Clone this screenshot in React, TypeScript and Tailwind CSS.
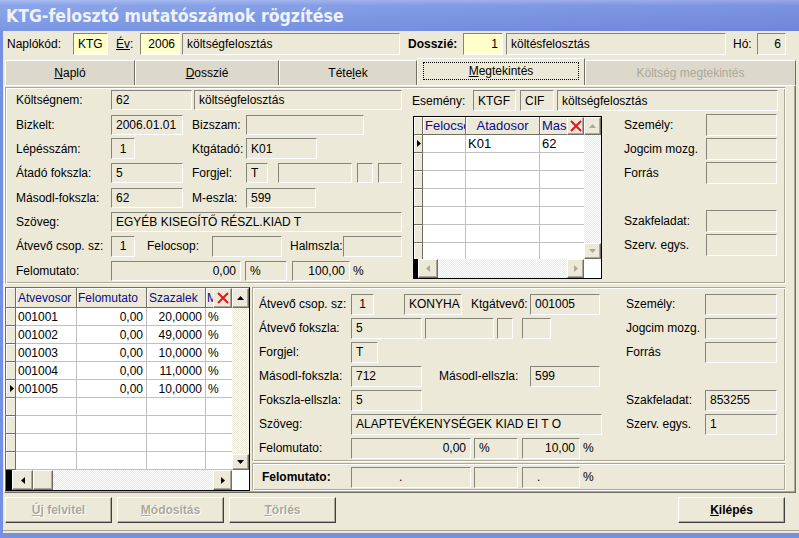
import React from 'react';

// classic win32 bevels
const sunken = 'border border-t-[#868579] border-l-[#868579] border-r-white border-b-white';
const raised =
  'border border-t-white border-l-white border-r-[#716f64] border-b-[#716f64] shadow-[inset_-1px_-1px_0_#aca899]';
const etched =
  'border border-t-[#aca899] border-l-[#aca899] border-r-white border-b-white shadow-[inset_1px_1px_0_#fff,inset_-1px_-1px_0_#aca899]';
const track = 'bg-[image:repeating-conic-gradient(#fff_0_25%,#ece9d8_0_50%)] bg-[length:2px_2px]';

type Align = 'left' | 'right' | 'center';

interface FieldProps {
  className: string;
  children?: React.ReactNode;
  yellow?: boolean;
  align?: Align;
}

const Field: React.FC<FieldProps> = ({ className, children, yellow, align = 'left' }) => {
  const alignCls =
    align === 'right' ? 'justify-end pr-[4px]' : align === 'center' ? 'justify-center' : 'pl-[4px]';
  return (
    <div
      className={`${sunken} ${yellow ? 'bg-[#ffffcc]' : 'bg-[#ece9d8]'} ${alignCls} flex items-center shrink-0 overflow-hidden whitespace-nowrap ${className}`}
    >
      {children}
    </div>
  );
};

const Label: React.FC<{ className?: string; children: React.ReactNode }> = ({ className = '', children }) => (
  <span className={`shrink-0 whitespace-nowrap ${className}`}>{children}</span>
);

const Arrow: React.FC<{ dir: 'up' | 'down' | 'left' | 'right'; color?: string }> = ({ dir, color = '#000' }) => {
  const vertical = dir === 'up' || dir === 'down';
  const pts = {
    up: '0,4 3.5,0 7,4',
    down: '0,0 7,0 3.5,4',
    left: '4,0 4,7 0,3.5',
    right: '0,0 0,7 4,3.5',
  }[dir];
  return (
    <svg width={vertical ? 7 : 4} height={vertical ? 4 : 7} viewBox={vertical ? '0 0 7 4' : '0 0 4 7'}>
      <polygon points={pts} fill={color} />
    </svg>
  );
};

const ScrollBtn: React.FC<{ dir: 'up' | 'down' | 'left' | 'right'; className: string; disabled?: boolean }> = ({
  dir,
  className,
  disabled,
}) => (
  <div className={`${raised} bg-[#ece9d8] flex items-center justify-center shrink-0 ${className}`}>
    <Arrow dir={dir} color={disabled ? '#aca899' : '#000'} />
  </div>
);

const XBtn: React.FC<{ className: string }> = ({ className }) => (
  <div className={`${raised} bg-[#ece9d8] flex items-center justify-center shrink-0 ${className}`}>
    <svg width="12" height="12" viewBox="0 0 12 12">
      <path d="M1 1 L11 11 M11 1 L1 11" stroke="#e3161c" strokeWidth="2" />
    </svg>
  </div>
);

const Ind: React.FC<{ className: string; active?: boolean }> = ({ className, active }) => (
  <div
    className={`bg-[#ece9d8] border-r border-b border-r-[#716f64] border-b-[#716f64] shadow-[inset_1px_1px_0_#fff] flex items-center justify-end pr-[1px] shrink-0 ${className}`}
  >
    {active && <Arrow dir="right" />}
  </div>
);

const HCell: React.FC<{ className: string; children?: React.ReactNode }> = ({ className, children }) => (
  <div
    className={`bg-[#ece9d8] border-r border-b border-r-[#716f64] border-b-[#716f64] shadow-[inset_1px_1px_0_#fff] text-[#0b0b8c] flex items-center overflow-hidden whitespace-nowrap shrink-0 ${className}`}
  >
    {children}
  </div>
);

const Cell: React.FC<{ className: string; children?: React.ReactNode }> = ({ className, children }) => (
  <div
    className={`bg-white border-b border-[#c0c0c0] flex items-center overflow-hidden whitespace-nowrap shrink-0 ${className}`}
  >
    {children}
  </div>
);

const TopGrid = () => {
  const rows = [
    ['', 'K01', '62'],
    ['', '', ''],
    ['', '', ''],
    ['', '', ''],
    ['', '', ''],
    ['', '', ''],
    ['', '', ''],
  ];
  return (
    <div className="w-[189px] h-[163px] border border-black bg-white flex flex-col shrink-0 mt-[3px] text-[13px]">
      <div className="flex h-[142px]">
        <div className="w-[170px] flex flex-col overflow-hidden">
          <div className="flex h-[18px] shrink-0">
            <HCell className="w-[9px]" />
            <HCell className="w-[43px] pl-[2px]">Felocso</HCell>
            <HCell className="w-[74px] justify-center">Atadosor</HCell>
            <HCell className="w-[27px] pl-[2px] border-r-0">Mas</HCell>
            <XBtn className="w-[17px]" />
          </div>
          {rows.map((r, i) => (
            <div key={i} className="flex h-[18px] shrink-0">
              <Ind className="w-[9px]" active={i === 0} />
              <Cell className="w-[43px] pl-[2px] border-r">{r[0]}</Cell>
              <Cell className="w-[74px] pl-[2px] border-r">{r[1]}</Cell>
              <Cell className="w-[44px] pl-[2px]">{r[2]}</Cell>
            </div>
          ))}
        </div>
        <div className="w-[17px] flex flex-col">
          <ScrollBtn dir="up" disabled className="h-[18px]" />
          <div className={`flex-1 ${track}`} />
          <ScrollBtn dir="down" disabled className="h-[16px]" />
        </div>
      </div>
      <div className="flex h-[19px]">
        <div className="w-[4px] bg-black shrink-0" />
        <ScrollBtn dir="left" disabled className="w-[20px]" />
        <div className={`flex-1 ${track}`} />
        <ScrollBtn dir="right" disabled className="w-[17px]" />
        <div className="w-[17px] bg-white shrink-0" />
      </div>
    </div>
  );
};

const BottomGrid = () => {
  const rows = [
    ['001001', '0,00', '20,0000', '%'],
    ['001002', '0,00', '49,0000', '%'],
    ['001003', '0,00', '10,0000', '%'],
    ['001004', '0,00', '11,0000', '%'],
    ['001005', '0,00', '10,0000', '%'],
    ['', '', '', ''],
    ['', '', '', ''],
    ['', '', '', ''],
    ['', '', '', ''],
  ];
  return (
    <div className="w-[245px] h-[204px] border border-t-[#716f64] border-l-[#716f64] border-r-black border-b-black bg-white flex flex-col shrink-0">
      <div className="flex h-[182px]">
        <div className="w-[226px] flex flex-col overflow-hidden">
          <div className="flex h-[20px] shrink-0">
            <HCell className="w-[10px]" />
            <HCell className="w-[61px] pl-[2px]">Atvevosor</HCell>
            <HCell className="w-[70px] pl-[1px]">Felomutato</HCell>
            <HCell className="w-[59px] pl-[2px]">Szazalek</HCell>
            <HCell className="w-[7px] pl-[1px] border-r-0">M</HCell>
            <XBtn className="w-[19px]" />
          </div>
          {rows.map((r, i) => (
            <div key={i} className="flex h-[18px] shrink-0">
              <Ind className="w-[10px]" active={i === 4} />
              <Cell className="w-[61px] pl-[2px] border-r">{r[0]}</Cell>
              <Cell className="w-[70px] justify-end pr-[3px] border-r">{r[1]}</Cell>
              <Cell className="w-[59px] justify-end pr-[3px] border-r">{r[2]}</Cell>
              <Cell className="w-[26px] pl-[2px]">{r[3]}</Cell>
            </div>
          ))}
        </div>
        <div className="w-[17px] flex flex-col">
          <ScrollBtn dir="up" className="h-[20px]" />
          <div className={`flex-1 ${track}`} />
          <ScrollBtn dir="down" className="h-[16px]" />
        </div>
      </div>
      <div className="flex h-[20px]">
        <div className="w-[6px] bg-black shrink-0" />
        <ScrollBtn dir="left" className="w-[21px]" />
        <div className={`${raised} bg-[#ece9d8] w-[20px] shrink-0`} />
        <div className={`flex-1 ${track}`} />
        <ScrollBtn dir="right" className="w-[19px]" />
        <div className="w-[17px] bg-white shrink-0" />
      </div>
    </div>
  );
};

const Tab: React.FC<{ className: string; children: React.ReactNode; selected?: boolean; disabled?: boolean }> = ({
  className,
  children,
  selected,
  disabled,
}) => (
  <div
    className={`${className} shrink-0 flex items-center justify-center border-t border-l border-r border-t-white border-l-white border-r-[#716f64] ${
      selected ? 'h-[27px] bg-[#ece9d8] px-[5px] pt-[3px] pb-[5px] relative z-10' : 'h-[25px] bg-[#dcd8cc]'
    } ${disabled ? 'text-[#aca899]' : ''}`}
  >
    {selected ? (
      <div className="w-full h-full border border-dotted border-black flex items-center justify-center">{children}</div>
    ) : (
      children
    )}
  </div>
);

const Btn: React.FC<{ className?: string; children: React.ReactNode; disabled?: boolean }> = ({
  className = '',
  children,
  disabled,
}) => (
  <button
    type="button"
    className={`h-[26px] w-[107px] shrink-0 flex items-center justify-center font-bold bg-[#ece9d8] border border-t-white border-l-white border-r-[#404040] border-b-[#404040] shadow-[inset_-1px_-1px_0_#aca899] ${
      disabled ? 'text-[#aca899] [text-shadow:1px_1px_0_#fff]' : 'text-black'
    } ${className}`}
  >
    {children}
  </button>
);

const RightPair: React.FC<{ label?: string; value?: string }> = ({ label, value }) =>
  label ? (
    <div className="flex items-center">
      <Label className="w-[79px]">{label}</Label>
      <Field className="w-[72px] h-[21px]">{value}</Field>
    </div>
  ) : null;

export default function App() {
  return (
    <div className="w-[799px] h-[538px] overflow-hidden bg-[#7590e2] font-['Liberation_Sans',Arial,sans-serif] text-[12px] text-black">
      {/* title bar */}
      <div className="h-[31px] flex items-center pl-[6px] pt-[2px] bg-[linear-gradient(90deg,rgba(255,255,255,0.06),rgba(70,50,170,0.12)),linear-gradient(180deg,#a2b7ef_0%,#83a0e8_18%,#7896e3_75%,#7490e2_100%)]">
        <span className="font-['DejaVu_Sans_Condensed','DejaVu_Sans',sans-serif] [font-stretch:condensed] font-bold text-[17.5px] text-[#eef2fc]">
          KTG-felosztó mutatószámok rögzítése
        </span>
      </div>

      <div className="ml-[3px] h-[502px] bg-[#ece9d8] flex flex-col">
        {/* header row */}
        <div className="h-[26px] flex items-center pl-[4px] shrink-0">
          <Label className="w-[66px]">Naplókód:</Label>
          <Field yellow className="w-[35px] h-[22px]">KTG</Field>
          <Label className="ml-[8px] w-[24px]">
            <span className="underline">Év</span>:
          </Label>
          <Field yellow align="right" className="w-[40px] h-[22px]">2006</Field>
          <Field className="ml-[2px] w-[218px] h-[22px]">költségfelosztás</Field>
          <Label className="ml-[8px] w-[55px] font-bold">Dosszié:</Label>
          <Field yellow align="right" className="w-[40px] h-[22px]">1</Field>
          <Field className="ml-[3px] w-[220px] h-[22px]">költésfelosztás</Field>
          <Label className="ml-[7px] w-[24px]">Hó:</Label>
          <Field align="right" className="w-[29px] h-[22px]">6</Field>
        </div>

        {/* tabs */}
        <div className="h-[28px] flex items-end pl-[2px] shrink-0">
          <Tab className="w-[130px]">
            <span><span className="underline">N</span>apló</span>
          </Tab>
          <Tab className="w-[144px]">
            <span><span className="underline">D</span>osszié</span>
          </Tab>
          <Tab className="w-[138px]">
            <span>Téte<span className="underline">l</span>ek</span>
          </Tab>
          <Tab className="w-[168px]" selected>
            <span><span className="underline">M</span>egtekintés</span>
          </Tab>
          <Tab className="w-[211px]" disabled>
            Költség megtekintés
          </Tab>
        </div>

        {/* tab page */}
        <div className="ml-[1px] w-[792px] h-[408px] shrink-0 border border-t-white border-l-white border-r-[#716f64] border-b-[#716f64] shadow-[inset_-1px_-1px_0_#aca899] pt-[1px] flex flex-col">
          {/* upper group */}
          <div className={`${etched} w-[781px] h-[197px] flex shrink-0`}>
            <div className="w-[404px] flex flex-col pl-[10px] shrink-0">
              <div className="h-[24.5px] flex items-center">
                <Label className="w-[95px]">Költségnem:</Label>
                <Field className="w-[81px] h-[20px]">62</Field>
                <Field className="ml-[2px] w-[208px] h-[20px]">költségfelosztás</Field>
              </div>
              <div className="h-[24.5px] flex items-center">
                <Label className="w-[95px]">Bizkelt:</Label>
                <Field className="w-[72px] h-[20px]">2006.01.01</Field>
                <Label className="ml-[9px] w-[54px]">Bizszam:</Label>
                <Field className="w-[118px] h-[20px]" />
              </div>
              <div className="h-[24.5px] flex items-center">
                <Label className="w-[95px]">Lépésszám:</Label>
                <Field align="center" className="w-[24px] h-[21px]">1</Field>
                <Label className="ml-[57px] w-[54px]">Ktgátadó:</Label>
                <Field className="w-[71px] h-[21px]">K01</Field>
              </div>
              <div className="h-[24.5px] flex items-center">
                <Label className="w-[95px]">Átadó fokszla:</Label>
                <Field className="w-[72px] h-[20px]">5</Field>
                <Label className="ml-[9px] w-[54px]">Forgjel:</Label>
                <Field className="w-[22px] h-[20px]">T</Field>
                <Field className="ml-[10px] w-[74px] h-[20px]" />
                <Field className="ml-[5px] w-[16px] h-[20px]" />
                <Field className="ml-[5px] w-[24px] h-[20px]" />
              </div>
              <div className="h-[24.5px] flex items-center">
                <Label className="w-[95px]">Másodl-fokszla:</Label>
                <Field className="w-[72px] h-[20px]">62</Field>
                <Label className="ml-[9px] w-[54px]">M-eszla:</Label>
                <Field className="w-[70px] h-[20px]">599</Field>
              </div>
              <div className="h-[24.5px] flex items-center">
                <Label className="w-[95px]">Szöveg:</Label>
                <Field className="w-[291px] h-[20px]">EGYÉB KISEGÍTŐ RÉSZL.KIAD T</Field>
              </div>
              <div className="h-[24.5px] flex items-center">
                <Label className="w-[95px]">Átvevő csop. sz:</Label>
                <Field align="center" className="w-[24px] h-[21px]">1</Field>
                <Label className="ml-[12px] w-[65px]">Felocsop:</Label>
                <Field className="w-[70px] h-[21px]" />
                <Label className="ml-[8px] w-[53px]">Halmszla:</Label>
                <Field className="w-[59px] h-[21px]" />
              </div>
              <div className="h-[24.5px] flex items-center">
                <Label className="w-[95px]">Felomutato:</Label>
                <Field align="right" className="w-[130px] h-[20px]">0,00</Field>
                <Field className="ml-[4px] w-[42px] h-[20px]">%</Field>
                <Field align="right" className="ml-[5px] w-[58px] h-[20px]">100,00</Field>
                <Label className="ml-[3px]">%</Label>
              </div>
            </div>

            <div className="flex flex-col">
              <div className="h-[25px] flex items-center pl-[2px] shrink-0">
                <Label className="w-[61px]">Esemény:</Label>
                <Field className="w-[43px] h-[21px]">KTGF</Field>
                <Field className="ml-[4px] w-[34px] h-[21px]">CIF</Field>
                <Field className="ml-[3px] w-[221px] h-[21px]">költségfelosztás</Field>
              </div>
              <div className="flex">
                <div className="ml-[3px]">
                  <TopGrid />
                </div>
                <div className="ml-[22px] flex flex-col">
                  {[
                    ['Személy:', ''],
                    ['Jogcim mozg.', ''],
                    ['Forrás', ''],
                    ['', ''],
                    ['Szakfeladat:', ''],
                    ['Szerv. egys.', ''],
                  ].map(([l], i) => (
                    <div key={i} className="h-[24px] flex items-center">
                      {l && (
                        <>
                          <Label className="w-[82px]">{l}</Label>
                          <Field className="w-[71px] h-[22px]" />
                        </>
                      )}
                    </div>
                  ))}
                </div>
              </div>
            </div>
          </div>

          {/* lower area */}
          <div className="flex mt-[3px]">
            <BottomGrid />
            <div className="ml-[2px] w-[534px] flex flex-col">
              <div className={`${etched} h-[175px] pt-[4px] flex flex-col`}>
                {[
                  {
                    left: (
                      <>
                        <Label className="w-[92px]">Átvevő csop. sz:</Label>
                        <Field align="center" className="w-[23px] h-[21px]">1</Field>
                        <Field className="ml-[30px] w-[58px] h-[21px]">KONYHA</Field>
                        <Label className="ml-[9px] w-[59px]">Ktgátvevő:</Label>
                        <Field className="w-[70px] h-[21px]">001005</Field>
                      </>
                    ),
                    right: ['Személy:', ''],
                  },
                  {
                    left: (
                      <>
                        <Label className="w-[92px]">Átvevő fokszla:</Label>
                        <Field className="w-[71px] h-[21px]">5</Field>
                        <Field className="ml-[3px] w-[69px] h-[21px]" />
                        <Field className="ml-[3px] w-[16px] h-[21px]" />
                        <Field className="ml-[9px] w-[29px] h-[21px]" />
                      </>
                    ),
                    right: ['Jogcim mozg.', ''],
                  },
                  {
                    left: (
                      <>
                        <Label className="w-[92px]">Forgjel:</Label>
                        <Field className="w-[27px] h-[21px]">T</Field>
                      </>
                    ),
                    right: ['Forrás', ''],
                  },
                  {
                    left: (
                      <>
                        <Label className="w-[92px]">Másodl-fokszla:</Label>
                        <Field className="w-[71px] h-[21px]">712</Field>
                        <Label className="ml-[17px] w-[91px]">Másodl-ellszla:</Label>
                        <Field className="w-[70px] h-[21px]">599</Field>
                      </>
                    ),
                    right: ['', ''],
                  },
                  {
                    left: (
                      <>
                        <Label className="w-[92px]">Fokszla-ellszla:</Label>
                        <Field className="w-[71px] h-[21px]">5</Field>
                      </>
                    ),
                    right: ['Szakfeladat:', '853255'],
                  },
                  {
                    left: (
                      <>
                        <Label className="w-[92px]">Szöveg:</Label>
                        <Field className="w-[251px] h-[21px]">ALAPTEVÉKENYSÉGEK KIAD EI T O</Field>
                      </>
                    ),
                    right: ['Szerv. egys.', '1'],
                  },
                  {
                    left: (
                      <>
                        <Label className="w-[92px]">Felomutato:</Label>
                        <Field align="right" className="w-[120px] h-[21px]">0,00</Field>
                        <Field className="ml-[3px] w-[44px] h-[21px]">%</Field>
                        <Field align="right" className="ml-[4px] w-[58px] h-[21px]">10,00</Field>
                        <Label className="ml-[3px]">%</Label>
                      </>
                    ),
                    right: ['', ''],
                  },
                ].map((row, i) => (
                  <div key={i} className="h-[24px] flex items-center shrink-0">
                    <div className="w-[373px] pl-[6px] flex items-center shrink-0">{row.left}</div>
                    <RightPair label={row.right[0]} value={row.right[1]} />
                  </div>
                ))}
              </div>
              <div className={`${etched} mt-[1px] h-[28px] flex items-center pl-[9px]`}>
                <Label className="w-[89px] font-bold">Felomutato:</Label>
                <Field className="w-[120px] h-[21px] !pl-[47px]">.</Field>
                <Field className="ml-[3px] w-[44px] h-[21px]" />
                <Field className="ml-[4px] w-[58px] h-[21px] !pl-[14px]">.</Field>
                <Label className="ml-[3px]">%</Label>
              </div>
            </div>
          </div>
        </div>

        {/* buttons */}
        <div className="mt-[4px] flex pl-[2px] pr-[14px] shrink-0">
          <Btn disabled>
            <span><span className="underline">Ú</span>j felvitel</span>
          </Btn>
          <Btn disabled className="ml-[5px]">
            <span><span className="underline">M</span>ódosítás</span>
          </Btn>
          <Btn disabled className="ml-[5px]">
            <span><span className="underline">T</span>örlés</span>
          </Btn>
          <Btn className="ml-auto">
            <span><span className="underline">K</span>ilépés</span>
          </Btn>
        </div>
        <div className="mt-auto h-[3px] border-t border-t-[#aca899] shrink-0" />
      </div>
    </div>
  );
}
